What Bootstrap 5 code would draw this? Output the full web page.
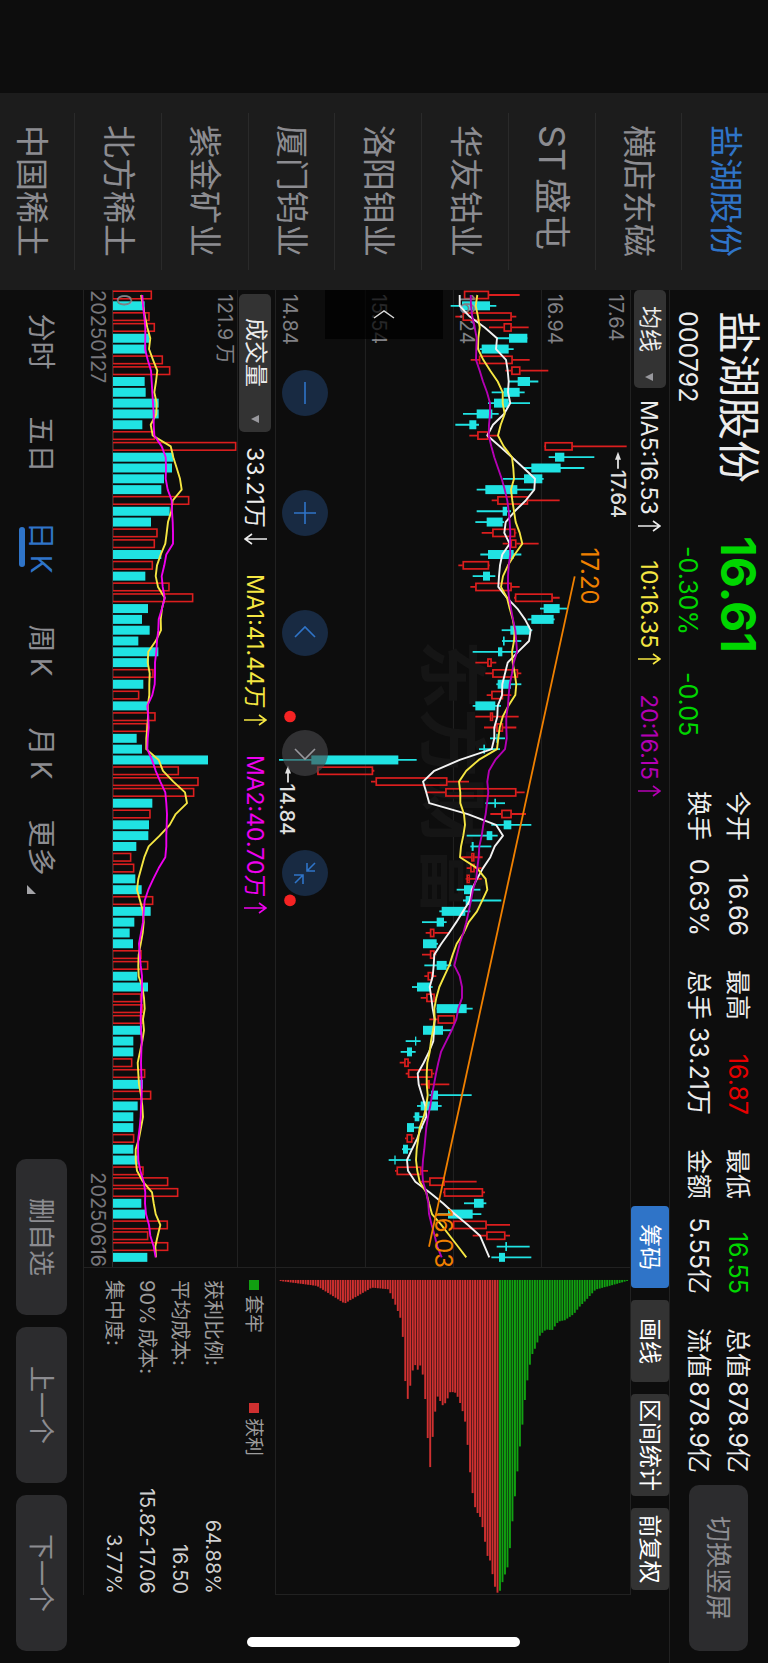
<!DOCTYPE html>
<html lang="zh-CN">
<head>
<meta charset="utf-8">
<meta name="viewport" content="width=device-width, initial-scale=1">
<title>盐湖股份 000792</title>
<link href="https://cdn.jsdelivr.net/npm/bootstrap@5.3.0/dist/css/bootstrap.min.css" rel="stylesheet">
<style>
:root{--bg:#0d0d0d;--line:#212121;--gray:#8c8c91;--blue:#2f74c8;--green:#00d600;--red:#e60000;--yellow:#f5e642;--purple:#b400b4}
html,body{height:100%;margin:0;background:var(--bg);overflow:hidden}
body{font-family:Inter,"Noto Sans CJK SC",sans-serif;color:#ececec}
/* the landscape screen, turned a quarter to the right */
.landscape{position:absolute;top:0;left:100%;width:100vh;height:100vw;transform-origin:0 0;transform:rotate(90deg);background:var(--bg);line-height:1;white-space:nowrap}
.notch{flex:0 0 93px}
.stocks{flex:0 0 197px;background:#1c1c1c;padding:0 20px;overflow:hidden}
.stocks a{flex:0 0 11.29%;border-bottom:1px solid #2a2a2a;padding-left:12px;font-size:33px;color:var(--gray);text-decoration:none;display:flex;align-items:center}
.stocks a.on{color:var(--blue)}
.stocks a.st{font-size:36px}
.quote{height:99px;flex:none;border-bottom:1px solid var(--line);padding-right:12px}
.r1{height:60px;display:flex;align-items:center}
.r2{height:40px;display:flex;align-items:center;font-size:25px}
.who{width:246px;padding-left:21px}
.who h1{font-size:43px;margin:0;font-weight:400}
.last{width:255px}
.price{font-size:48px;font-weight:700;color:var(--green)}
.chg{color:var(--green);padding-left:10px;gap:37px}
.stats{display:grid;grid-template-columns:repeat(4,145px);grid-auto-rows:39px;column-gap:34px;padding-top:11px;font-size:25px}
.stats div{display:flex;justify-content:space-between;align-items:center}
.btn{--bs-btn-border-width:0px;line-height:1;padding:0;white-space:nowrap}
.soft,.soft:hover{background:#2c2c2e;color:var(--gray);font-size:26px;border-radius:10px}
.turn{width:166px;height:59px;margin:20px 0 0 auto}
.tools{height:39px;flex:none;border-bottom:1px solid var(--line);gap:12px;padding-right:5px}
.pick,.pick:hover{background:#333;color:#ececec;font-size:23px;height:32px;border-radius:5px}
.pick svg{margin-left:20px}
.pill,.pill:hover{background:#333;color:#fff;font-size:23px;height:38px;min-width:82px;padding:0 5px;border-radius:4px}
.pill.on{background:var(--blue)}
.inds{gap:29px;font-size:23px;padding-top:2px}
.inds span svg{margin-left:5px;vertical-align:-3px}
.mid{flex:1;min-height:0}
.left-col{flex:1;min-width:0;border-right:1px solid var(--line)}
.kbox{flex:1;min-height:0;border-bottom:1px solid var(--line)}
.kbox svg.plot,.chips svg,.vbox svg{display:block;width:100%;height:100%}
.side-tab,.side-tab:hover{position:absolute;left:0;bottom:49px;width:49px;height:118px;background:rgba(0,0,0,.7);border-radius:0}
.rounds{position:absolute;left:80px;bottom:6px;gap:74px}
.rounds .btn{width:46px;height:46px;border-radius:50%;background:#182a42;color:#2f74c8}
.rounds .btn.off{background:rgba(72,72,76,.62);color:#98989d}
.rounds svg{display:block;margin:auto}
.vhead{height:38px;flex:none;border-bottom:1px solid var(--line)}
.vbox{height:125px;flex:none}
.dates{height:28px;flex:none;font-size:20px;color:#77777c}
.panel{flex:0 0 327px}
.chips{flex:1;min-height:0;border-right:1px solid var(--line);border-bottom:1px solid var(--line)}
.cost{height:191px;flex:none;padding:11px 1px 0 12px;font-size:20px}
.legend-row{height:20px;margin-bottom:14px;gap:70px;color:#9c9c9c;font-size:19px}
.legend-row i{width:10px;height:10px;display:inline-block;margin-right:5px;vertical-align:2px}
.cost table{width:100%;height:132px}
.cost th,.cost td{padding:0;font-weight:400;height:33px;vertical-align:middle}
.cost th{color:#9c9c9c}.cost td{text-align:right;color:#cfcfcf}
.body-right{width:68px;flex:none;padding:0 16px 16px 0}
.foot{height:83px;flex:none;padding-right:12px}
.foot nav a{width:103px;height:56px;font-size:28px;color:var(--gray);text-decoration:none;display:flex;align-items:center;justify-content:center;position:relative;white-space:pre}
.foot nav a svg{margin:0 0 14px 9px}
.foot nav a.on{color:var(--blue)}
.foot nav a.on::after{content:"";position:absolute;left:31px;bottom:6px;width:40px;height:6px;border-radius:3px;background:var(--blue)}
.foot .soft{width:156px;height:51px}
.foot .acts{gap:12px}
.home-bar{width:10px;height:273px;border-radius:5px;background:#fff}
.w{color:#ececec}.y{color:var(--yellow)}.p{color:var(--purple)}.m{color:#ee00ee}
text{font-family:Inter,"Noto Sans CJK SC",sans-serif}
</style>
</head>
<body>
<svg width="0" height="0" class="position-absolute" aria-hidden="true"><symbol id="up" viewBox="0 0 12 23"><path d="M6 23V1M1 8l5-7 5 7" fill="none" stroke="currentColor" stroke-width="1.6"/></symbol><symbol id="down" viewBox="0 0 12 23"><path d="M6 0v22M1 15l5 7 5-7" fill="none" stroke="currentColor" stroke-width="1.6"/></symbol></svg>
<div class="landscape d-flex">
  <div class="notch"></div>
  <nav class="stocks d-flex flex-column" aria-label="自选股">
    <a class="on" href="#">盐湖股份</a><a href="#">横店东磁</a><a class="st" href="#">ST&thinsp;盛屯</a><a href="#">华友钴业</a><a href="#">洛阳钼业</a><a href="#">厦门钨业</a><a href="#">紫金矿业</a><a href="#">北方稀土</a><a href="#">中国稀土</a>
  </nav>
  <main class="flex-grow-1 d-flex flex-column" style="min-width:0">
    <div class="d-flex flex-column flex-grow-1" style="min-height:0">
      <header class="d-flex flex-column">
        <div class="d-flex quote">
          <div class="who"><div class="r1"><h1>盐湖股份</h1></div><div class="r2">000792</div></div>
          <div class="last"><div class="r1 price">16.61</div><div class="r2 chg"><span>-0.30%</span><span>-0.05</span></div></div>
          <div class="stats">
            <div><span>今开</span><span>16.66</span></div><div><span>最高</span><span style="color:var(--red)">16.87</span></div><div><span>最低</span><span style="color:var(--green)">16.55</span></div><div><span>总值</span><span>878.9亿</span></div>
            <div><span>换手</span><span>0.63%</span></div><div><span>总手</span><span>33.21万</span></div><div><span>金额</span><span>5.55亿</span></div><div><span>流值</span><span>878.9亿</span></div>
          </div>
          <button class="btn soft turn" type="button">切换竖屏</button>
        </div>
      </header>
      <div class="d-flex mid">
        <div class="d-flex flex-column flex-grow-1" style="min-width:0">
          <div class="tools d-flex align-items-center">
            <button class="btn pick" style="padding:0 2px 0 16px" type="button">均线<svg width="14" height="9" viewBox="0 0 14 9"><path d="M1 0h8L5 8z" fill="#98989d"/></svg></button>
            <div class="inds d-flex me-auto"><span class="w">MA5:16.53<svg width="12" height="23"><use href="#up"/></svg></span><span class="y">10:16.35<svg width="12" height="23"><use href="#up"/></svg></span><span class="p">20:16.15<svg width="12" height="23"><use href="#up"/></svg></span></div>
            <button class="btn pill on" type="button">筹码</button><button class="btn pill" type="button">画线</button><button class="btn pill" type="button">区间统计</button><button class="btn pill" type="button">前复权</button>
          </div>
          <div class="d-flex flex-grow-1" style="min-height:0">
            <section class="left-col d-flex flex-column">
              <div class="kbox position-relative">
                <svg class="plot" id="kline" viewBox="0 0 978 354" preserveAspectRatio="none"></svg>
                <button class="btn side-tab" type="button" aria-label="收起"><svg width="12" height="22" viewBox="0 0 12 22"><path d="M9 1 2 11l7 10" fill="none" stroke="#d8d8d8" stroke-width="1.5"/></svg></button>
                <div class="rounds d-flex">
                  <button class="btn" type="button" aria-label="缩小"><svg width="24" height="24" viewBox="-12 -12 24 24" stroke="currentColor" stroke-width="1.6" fill="none"><path d="M-11 0H11"/></svg></button>
                  <button class="btn" type="button" aria-label="放大"><svg width="24" height="24" viewBox="-12 -12 24 24" stroke="currentColor" stroke-width="1.6" fill="none"><path d="M-11 0H11M0-11V11"/></svg></button>
                  <button class="btn" type="button" aria-label="左移"><svg width="24" height="24" viewBox="-12 -12 24 24" stroke="currentColor" stroke-width="1.6" fill="none"><path d="M4-10-6 0 4 10"/></svg></button>
                  <button class="btn off" type="button" aria-label="右移"><svg width="24" height="24" viewBox="-12 -12 24 24" stroke="currentColor" stroke-width="1.6" fill="none"><path d="M-4-10 6 0-4 10"/></svg></button>
                  <button class="btn" type="button" aria-label="退出全屏"><svg width="24" height="24" viewBox="-12 -12 24 24" stroke="currentColor" stroke-width="1.6" fill="none"><path d="M-10-10-2-2M-10-2h8v-8M10 10 2 2M2 11V2h9"/></svg></button>
                </div>
              </div>
              <div class="vhead d-flex align-items-center inds">
                <button class="btn pick" style="padding:0 5px 0 24px;margin:0 -14px 0 4px" type="button">成交量<svg style="margin-left:26px" width="14" height="9" viewBox="0 0 14 9"><path d="M2 0h8L6 8z" fill="#98989d"/></svg></button>
                <span class="w">33.21万<svg width="12" height="23"><use href="#down"/></svg></span><span class="y">MA1:41.44万<svg width="12" height="23"><use href="#up"/></svg></span><span class="m">MA2:40.70万<svg width="12" height="23"><use href="#up"/></svg></span>
              </div>
              <div class="vbox"><svg id="vol" viewBox="0 0 978 125" preserveAspectRatio="none"></svg></div>
              <div class="dates d-flex justify-content-between align-items-center"><span>20250127</span><span>20250616</span></div>
            </section>
            <aside class="panel d-flex flex-column">
              <div class="chips"><svg id="chips" viewBox="0 0 327 354" preserveAspectRatio="none"></svg></div>
              <div class="cost">
                <div class="legend-row d-flex align-items-center"><span><i style="background:#11a011"></i>套牢</span><span><i style="background:#cf3030"></i>获利</span></div>
                <table><tbody><tr><th scope="row">获利比例:</th><td>64.88%</td></tr><tr><th scope="row">平均成本:</th><td>16.50</td></tr><tr><th scope="row">90%&thinsp;成本:</th><td>15.82-17.06</td></tr><tr><th scope="row">集中度:</th><td>3.77%</td></tr></tbody></table>
              </div>
            </aside>
          </div>
          <div style="border-top:1px solid var(--line)"></div>
        </div>
        <div class="body-right d-flex align-items-center justify-content-end"><div class="home-bar"></div></div>
      </div>
    </div>
    <footer class="foot d-flex align-items-center justify-content-between">
      <nav class="d-flex"><a href="#">分时</a><a href="#">五日</a><a class="on" href="#">日&thinsp;K</a><a href="#">周&thinsp;K</a><a href="#">月&thinsp;K</a><a href="#">更多<svg class="align-self-end" width="9" height="9" viewBox="0 0 9 9"><path d="M9 0v9H0z" fill="#a4a4a8"/></svg></a></nav>
      <div class="acts d-flex"><button class="btn soft" type="button">删自选</button><button class="btn soft" type="button">上一个</button><button class="btn soft" type="button">下一个</button></div>
    </footer>
  </main>
</div>
<script src="https://cdn.jsdelivr.net/npm/bootstrap@5.3.0/dist/js/bootstrap.bundle.min.js"></script>
<script>
// direction, low, body bottom, body top, high (thirds of a chart unit)
const K=`r583,583,658,750 c543,577,661,680 r557,579,726,740 r658,702,726,777 c682,718,773,773 c630,636,717,732 r603,628,729,780 r707,725,752,836 c718,744,781,806 c666,702,750,765 c655,673,717,781 c580,621,668,687 c557,599,620,628 r599,623,656,688 r823,825,909,1071 c837,856,884,974 c762,785,873,944 c700,763,818,822 c621,647,743,792 r666,683,775,870 c621,699,712,724 c617,651,699,703 r636,668,737,740 r699,723,740,807 c632,655,732,755 r566,579,658,660 c609,640,661,677 r602,617,726,750 r733,736,849,870 c811,822,870,892 c774,785,852,855 c696,722,781,788 c697,700,705,755 c609,685,698,743 r617,653,666,680 r647,668,745,755 c680,684,724,755 r651,665,700,725 c609,617,677,694 r617,661,670,747 r643,680,700,740 c661,680,684,706 c628,641,646,691 c28,125,386,441 r141,143,310,314 r304,318,533,598 r472,527,740,765 c647,674,679,706 r662,695,726,769 c665,702,725,785 c591,651,668,684 c602,606,612,665 r573,605,614,639 r591,602,615,636 r588,591,600,636 c561,583,608,632 c580,588,603,695 c509,516,587,602 c457,501,523,531 r468,481,494,540 c460,460,501,505 r457,481,495,500 c464,501,531,545 r464,474,488,500 c427,442,483,489 r453,470,495,497 c501,501,591,609 r479,504,555,557 c460,460,520,545 c408,436,440,453 c393,412,427,438 r390,404,417,423 r408,415,488,494 r453,474,480,539 c479,484,505,606 c442,453,505,516 c431,435,449,465 c412,412,433,460 r406,411,428,434 c397,400,415,427 c357,374,378,423 r376,381,455,475 r453,479,525,621 r520,523,640,646 c583,613,642,650 c505,535,609,635 r545,550,651,721 r609,650,707,721 c681,707,712,780 c665,688,706,785`.split(' ');
const MA5=[570,570,600,645,682,679,709,714,717,715,722,703,670,653,690,727,762,796,794,768,735,708,704,720,698,691,688,686,712,743,766,783,778,745,714,706,698,697,684,683,674,674,666,570,494,460,470,479,594,679,700,675,662,640,622,606,601,580,560,538,515,494,492,489,480,485,489,495,493,491,478,462,444,447,457,467,470,455,443,427,412,415,437,480,520,555,595,631,645,659];
const MA10=[623,618,625,630,626,625,641,662,684,699,699,705,693,685,702,727,731,733,724,728,733,738,750,758,735,715,700,694,712,720,729,735,733,727,729,735,740,737,716,699,690,686,682,627,590,568,572,572,583,586,581,574,571,622,648,653,638,622,597,582,561,549,539,524,509,500,494,495,490,484,480,473,471,471,474,470,462,450,446,441,439,443,450,470,478,487,515,540,565,590];
const MA20=[603,604,608,615,621,620,619,630,640,652,661,661,658,657,665,674,685,696,705,713,717,720,722,721,722,717,715,715,718,724,730,737,740,742,732,727,720,717,715,710,710,711,706,677,658,653,656,652,648,641,636,629,627,623,620,610,604,597,590,581,570,562,554,570,577,577,566,560,546,530,514,506,499,493,487,482,475,470,467,464,460,458,460,470,476,478,486,495,503,516];
const V='r217 c195 r210 r226 c210 c200 r250 r272 c195 c198 c237 c237 c188 r226 r470 c281 c277 c253 c245 r329 c270 c214 r234 r226 c245 r220 c197 r270 r341 c205 c187 c210 c176 c236 c208 r222 c191 r179 c204 r228 r203 c171 c187 c385 r298 r357 r344 c218 r213 c208 c206 c170 r155 r164 c167 c186 r221 c213 c164 c150 c160 r186 r206 c173 c205 r185 r190 r190 c187 c161 c161 r158 r197 c190 r215 c174 c161 c161 r164 c161 c174 r192 r266 r296 c185 c196 r265 r206 r266 c203'.split(' ');
const VM1=[184,190,196,203,212,208,220,233,229,224,231,230,213,219,273,281,291,301,306,279,275,265,261,257,243,232,228,235,255,247,243,244,228,206,204,210,209,209,204,205,203,200,200,237,250,281,316,322,288,270,240,207,194,185,176,172,181,190,192,189,183,177,176,177,188,193,195,190,193,188,181,174,176,178,184,188,190,184,178,168,168,172,190,217,222,228,242,234,227,229];
const VM2=[188,190,194,197,197,196,204,214,216,218,220,222,222,224,246,258,259,258,264,276,277,279,280,280,260,254,246,249,255,247,237,236,232,230,226,226,225,218,203,206,207,204,203,217,228,242,257,260,262,261,260,260,257,237,221,206,195,192,190,184,178,180,183,187,187,186,184,183,184,186,185,184,185,186,186,184,183,180,176,175,176,182,192,197,196,199,208,212,222,228];
// cost distribution: price position, amount
const C=[[455,240],[540,255],[603,308],[665,260],[703,265],[715,300],[728,343],[732,360],[736,415],[740,530],[747,596],[752,560],[758,510],[764,493],[770,508],[775,493],[781,522],[787,600],[792,708],[798,800],[804,704],[810,625],[815,588],[821,602],[827,615],[833,607],[839,590],[844,573],[857,577],[867,610],[873,637],[879,672],[884,745],[890,832],[896,893],[902,932],[911,947],[919,990],[924,1034],[930,1077],[936,1083],[941,1132],[947,1168],[953,1182],[958,1170],[964,1140],[970,1117],[976,1095],[981,1027],[987,941],[993,864],[998,797],[1004,718],[1010,652],[1015,582],[1021,525],[1027,478],[1033,450],[1039,440],[1046,408],[1052,398],[1062,386],[1076,388],[1090,362],[1105,358],[1125,340],[1140,315],[1150,302],[1175,266],[1220,250],[1247,240]];
const RED='#dc1e1e',CY='#20e3e3',X=i=>5+10.824*i,P=v=>(1081-v)/3,Q=v=>(472-v)/3;
const line=(a,f,c,w)=>`<polyline points="${a.map((v,i)=>X(i).toFixed(1)+','+f(v).toFixed(1)).join(' ')}" fill="none" stroke="${c}" stroke-width="${w}" stroke-linejoin="round"/>`;
const txt=(x,y,s,c,z,e='')=>`<text x="${x}" y="${y}" fill="${c}" font-size="${z}" ${e}>${s}</text>`;
let k='';
[88.6,176.6,264.6].forEach(y=>k+=`<path d="M0 ${y}H978" stroke="#232323"/>`);
k+=txt(350,203,'东方财富','#151515',69,'font-weight="700"');
K.forEach((d,i)=>{const[a,b,c,e]=d.slice(1).split(',').map(Number),x=X(i),r=d[0]=='r',col=r?RED:CY;
 if(r)k+=`<path d="M${x} ${P(e)}V${P(c)}M${x} ${P(b)}V${P(a)}" stroke="${col}" stroke-width="1.8"/><rect x="${x-3.6}" y="${P(c)+.6}" width="7.2" height="${Math.max(1,(c-b)/3-1.2)}" fill="none" stroke="${col}" stroke-width="1.7"/>`;
 else k+=`<path d="M${x} ${P(e)}V${P(a)}" stroke="${col}" stroke-width="1.8"/><rect x="${x-4.5}" y="${P(c)}" width="9" height="${(c-b)/3}" fill="${col}"/>`;});
[[21,'17.64'],[82,'16.94'],[170,'16.24'],[258,'15.54'],[347,'14.84']].forEach(a=>k+=txt(4,a[0],a[1],'#808085',20));
k+=line(MA5,P,'#f2f2f2',1.9)+line(MA10,P,'#f5e642',1.9)+line(MA20,P,'#b400b4',1.9);
k+='<path d="M286.7 55.3 957.7 201" stroke="#f08000" stroke-width="1.8"/>';
k+=txt(258,49,'17.20','#f08000',24)+txt(919,195,'16.03','#f08000',24);
k+=txt(180,19,'17.64','#e0e0e0',20,'font-weight="500"')+txt(494,350,'14.84','#e0e0e0',20,'font-weight="500"');
k+='<g stroke="#e0e0e0" stroke-width="1.8" fill="#e0e0e0"><path d="M165 12h14M479 342h14"/><path d="M162 12l8-3v6zM476 342l8-3v6z" stroke="none"/></g><circle cx="427" cy="340" r="5.8" fill="#f52323"/><circle cx="611" cy="340" r="5.8" fill="#f52323"/>';
document.getElementById('kline').innerHTML=k;
let s='';
V.forEach((d,i)=>{const v=+d.slice(1),x=X(i);
 s+=d[0]=='r'?`<rect x="${x-3.8}" y="${Q(v)+.7}" width="7.6" height="${124.4-Q(v)-.7}" fill="none" stroke="${RED}" stroke-width="1.6"/>`:`<rect x="${x-4.5}" y="${Q(v)}" width="9" height="${125-Q(v)}" fill="${CY}"/>`;});
s+='<path d="M0 124.5H978" stroke="#303030"/>'+txt(4,19,'121.9\u2009万','#808085',20)+txt(4,120,'0','#808085',20)+line(VM1,Q,'#f5e642',1.9)+line(VM2,Q,'#ee00ee',1.9);
document.getElementById('vol').innerHTML=s;
let h='',j=0;
for(let v=457.2;v<1247;v+=5.68){while(C[j+1][0]<v)j++;const[a,b]=C[j],[c,d]=C[j+1],w=b+(d-b)*(v-a)/(c-a);
 h+=`<rect x="12" y="${(550-v/2.279-1).toFixed(2)}" width="${((w-240)/3+1).toFixed(1)}" height="1.9" fill="${v<956?'#cf3030':'#11a011'}"/>`;}
document.getElementById('chips').innerHTML=h;
</script>
</body>
</html>
